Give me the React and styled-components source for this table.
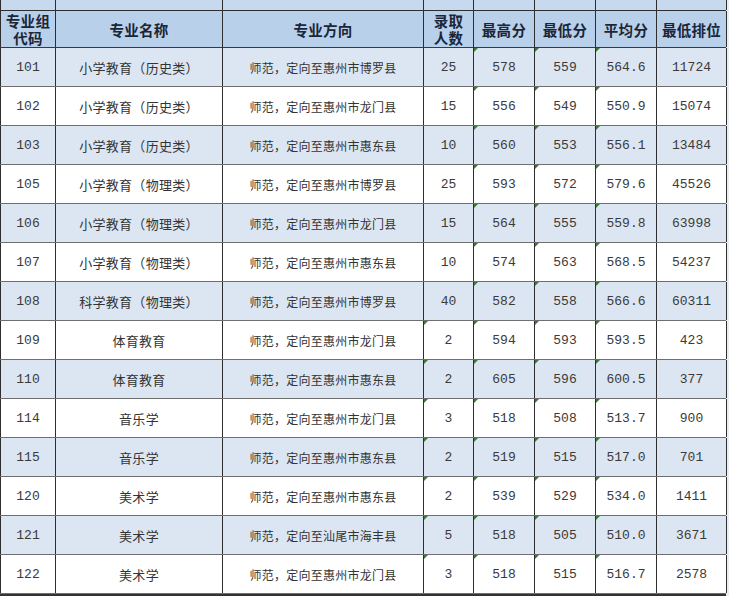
import styled, { createGlobalStyle } from 'styled-components'

const GlobalStyle = createGlobalStyle`
  html, body {
    margin: 0;
    padding: 0;
    background: #e9eef3;
  }
  body {
    font-family: "Noto Sans CJK SC", "Noto Sans", sans-serif;
  }
`

const COLS = '55px 167px 201px 50px 61px 61px 61px 71px'

const rows = [
  ['101', '小学教育（历史类）', '师范，定向至惠州市博罗县', '25', '578', '559', '564.6', '11724'],
  ['102', '小学教育（历史类）', '师范，定向至惠州市龙门县', '15', '556', '549', '550.9', '15074'],
  ['103', '小学教育（历史类）', '师范，定向至惠州市惠东县', '10', '560', '553', '556.1', '13484'],
  ['105', '小学教育（物理类）', '师范，定向至惠州市博罗县', '25', '593', '572', '579.6', '45526'],
  ['106', '小学教育（物理类）', '师范，定向至惠州市龙门县', '15', '564', '555', '559.8', '63998'],
  ['107', '小学教育（物理类）', '师范，定向至惠州市惠东县', '10', '574', '563', '568.5', '54237'],
  ['108', '科学教育（物理类）', '师范，定向至惠州市博罗县', '40', '582', '558', '566.6', '60311'],
  ['109', '体育教育', '师范，定向至惠州市龙门县', '2', '594', '593', '593.5', '423'],
  ['110', '体育教育', '师范，定向至惠州市惠东县', '2', '605', '596', '600.5', '377'],
  ['114', '音乐学', '师范，定向至惠州市龙门县', '3', '518', '508', '513.7', '900'],
  ['115', '音乐学', '师范，定向至惠州市惠东县', '2', '519', '515', '517.0', '701'],
  ['120', '美术学', '师范，定向至惠州市惠东县', '2', '539', '529', '534.0', '1411'],
  ['121', '美术学', '师范，定向至汕尾市海丰县', '5', '518', '505', '510.0', '3671'],
  ['122', '美术学', '师范，定向至惠州市龙门县', '3', '518', '515', '516.7', '2578'],
]

const headers = ['专业组\n代码', '专业名称', '专业方向', '录取\n人数', '最高分', '最低分', '平均分', '最低排位']

const Sheet = styled.div`
  width: 726px;
  border-bottom: 2px solid #333;
`

const Row = styled.div`
  display: grid;
  grid-template-columns: ${COLS};
  height: ${p => p.$h}px;
  background: ${p => p.$bg};
  border-bottom: 1px solid ${p => p.$line || '#6f6f6f'};
  box-sizing: border-box;
`

const Cell = styled.div`
  position: relative;
  display: flex;
  align-items: center;
  justify-content: center;
  text-align: center;
  border-left: 1px solid #2e2e2e;
  box-sizing: border-box;
  color: #3a3a3a;
  &:last-child {
    border-right: 1px solid #2e2e2e;
  }
  ${p => p.$flag && `
    &::before {
      content: '';
      position: absolute;
      left: 0;
      top: 0;
      border-top: 4px solid #3d7a35;
      border-right: 4px solid transparent;
    }
  `}
`

const HeadCell = styled(Cell)`
  color: #1a2638;
  font-weight: 700;
  font-size: 14.5px;
  letter-spacing: 0.3px;
  line-height: 17px;
  white-space: pre-line;
`

const NumText = styled.span`
  font-family: "Liberation Mono", "DejaVu Sans Mono", monospace;
  font-size: 13px;
  color: #3a3a3a;
`

const NameText = styled.span`
  font-family: "Noto Sans CJK SC", sans-serif;
  font-size: 13px;
  letter-spacing: 0.3px;
  color: #333;
`

const DirText = styled.span`
  font-family: "Noto Sans CJK SC", sans-serif;
  font-size: 12px;
  letter-spacing: 0.25px;
  color: #333;
`

export default function App() {
  return (
    <>
      <GlobalStyle />
      <Sheet lang="zh-CN">
        <Row $h={11} $bg="#c7d9ee" $line="#2e2e2e">
          {headers.map((_, i) => <Cell key={i} />)}
        </Row>
        <Row $h={37} $bg="#b9d0ea" $line="#3a3a3a">
          {headers.map(h => <HeadCell key={h}>{h}</HeadCell>)}
        </Row>
        {rows.map((r, idx) => (
          <Row key={r[0]} $h={39} $bg={idx % 2 === 0 ? '#dce6f2' : '#ffffff'}>
            <Cell><NumText>{r[0]}</NumText></Cell>
            <Cell><NameText>{r[1]}</NameText></Cell>
            <Cell><DirText>{r[2]}</DirText></Cell>
            <Cell $flag={idx >= 7}><NumText>{r[3]}</NumText></Cell>
            <Cell $flag><NumText>{r[4]}</NumText></Cell>
            <Cell $flag><NumText>{r[5]}</NumText></Cell>
            <Cell $flag><NumText>{r[6]}</NumText></Cell>
            <Cell><NumText>{r[7]}</NumText></Cell>
          </Row>
        ))}
      </Sheet>
    </>
  )
}
